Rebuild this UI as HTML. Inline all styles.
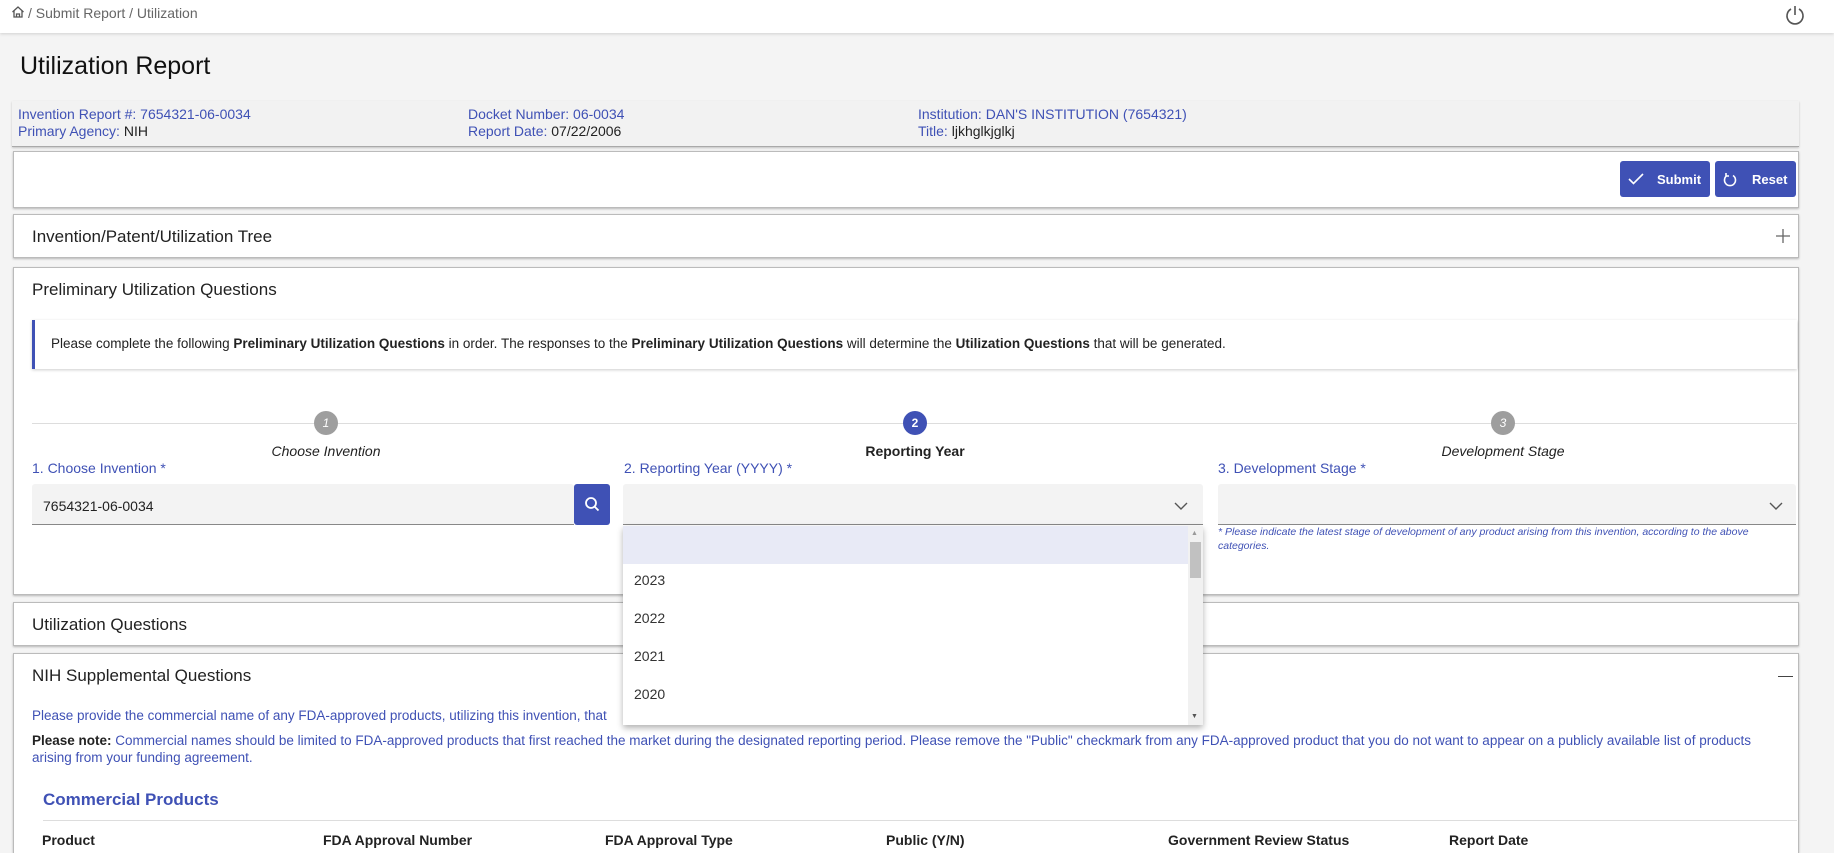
<!DOCTYPE html>
<html><head><meta charset="utf-8"><style>
*{box-sizing:border-box;margin:0;padding:0}
html,body{width:1834px;height:853px;overflow:hidden}
body{background:#f4f4f4;font-family:"Liberation Sans",sans-serif;color:#222;position:relative}
.a{position:absolute}
.card{position:absolute;left:13px;width:1786px;background:#fff;border:1px solid #bbb;box-shadow:0 1px 2px rgba(0,0,0,.25)}
.blue{color:#3f51b5}
.t{font-size:17px;color:#222}
.btn{position:absolute;top:161px;height:36px;background:#3f51b5;color:#fff;border-radius:3px;font-weight:bold;font-size:13px;display:flex;align-items:center}
.circ{position:absolute;width:24px;height:24px;border-radius:50%;background:#9e9e9e;color:#fff;font-size:12px;font-style:italic;text-align:center;line-height:24px;top:411px}
.lbl{position:absolute;top:460px;font-size:14px;color:#3f51b5}
.inp{position:absolute;top:484px;height:41px;background:#f3f3f3;border-bottom:1px solid #888;border-radius:3px 3px 0 0}
.th{position:absolute;top:832px;font-size:14px;font-weight:bold;color:#222}
</style></head><body>
<div class="a" style="left:0;top:0;width:1834px;height:33px;background:#fff;box-shadow:0 1px 3px rgba(0,0,0,.15)"></div>
<svg class="a" style="left:11px;top:5px" width="14" height="14" viewBox="0 0 14 14" fill="none" stroke="#555" stroke-width="1.3"><path d="M1.5 7L7 2l5.5 5M3 6v6h8V6M5.5 12V9h3v3"/></svg>
<div class="a" style="left:28px;top:5px;font-size:14px;color:#666">/ Submit Report / Utilization</div>
<svg class="a" style="left:1784px;top:4px" width="22" height="22" viewBox="0 0 22 22" fill="none" stroke="#555" stroke-width="1.6"><path d="M7 5a8 8 0 1 0 8 0M11 2v9"/></svg>
<div class="a" style="left:20px;top:52px;font-size:25px;color:#111">Utilization Report</div>
<div class="a" style="left:12px;top:101px;width:1787px;height:46px;background:#f2f2f2;border-bottom:1px solid #aaa;box-shadow:0 1px 2px rgba(0,0,0,.2);font-size:14px;line-height:17px">
<div class="a" style="left:6px;top:5px"><span class="blue">Invention Report #: 7654321-06-0034</span><br><span class="blue">Primary Agency:</span> NIH</div>
<div class="a" style="left:456px;top:5px"><span class="blue">Docket Number: 06-0034</span><br><span class="blue">Report Date:</span> 07/22/2006</div>
<div class="a" style="left:906px;top:5px"><span class="blue">Institution: DAN'S INSTITUTION (7654321)</span><br><span class="blue">Title:</span> ljkhglkjglkj</div>
</div>
<div class="card" style="top:151px;height:57px"></div>
<div class="btn" style="left:1620px;width:90px"><svg style="margin:0 13px 0 8px" width="16" height="14" viewBox="0 0 16 14" fill="none" stroke="#fff" stroke-width="1.6"><path d="M1 7l4.5 4.5L15 2"/></svg>Submit</div>
<div class="btn" style="left:1715px;width:81px"><svg style="margin:0 15px 0 8px" width="14" height="16" viewBox="0 0 14 16" fill="none" stroke="#fff" stroke-width="1.6"><path d="M10 4.5a5.5 5.5 0 1 1 -6 0M3 2v3h3"/></svg>Reset</div>
<div class="card" style="top:214px;height:44px"><div class="a t" style="left:18px;top:12px">Invention/Patent/Utilization Tree</div>
<svg class="a" style="left:1762px;top:14px" width="14" height="14" viewBox="0 0 14 14" stroke="#666" stroke-width="1.3"><path d="M7 0v14M0 7h14"/></svg></div>
<div class="card" style="top:267px;height:328px">
<div class="a t" style="left:18px;top:12px">Preliminary Utilization Questions</div>
<div class="a" style="left:18px;top:52px;width:1765px;height:49px;background:#fff;border-left:3px solid #3f51b5;box-shadow:0 1px 3px rgba(0,0,0,.2);font-size:13.5px;padding:16px 0 0 16px">Please complete the following <b>Preliminary Utilization Questions</b> in order. The responses to the <b>Preliminary Utilization Questions</b> will determine the <b>Utilization Questions</b> that will be generated.</div>
<div class="a" style="left:18px;top:155px;width:1765px;height:1px;background:#ddd"></div>
</div>
<div class="circ" style="left:314px">1</div>
<div class="circ" style="left:903px;background:#3f51b5;font-style:normal;font-weight:bold">2</div>
<div class="circ" style="left:1491px">3</div>
<div class="a" style="left:226px;width:200px;text-align:center;top:443px;font-size:14px;font-style:italic">Choose Invention</div>
<div class="a" style="left:815px;width:200px;text-align:center;top:443px;font-size:14px;font-weight:bold">Reporting Year</div>
<div class="a" style="left:1403px;width:200px;text-align:center;top:443px;font-size:14px;font-style:italic">Development Stage</div>
<div class="lbl" style="left:32px">1. Choose Invention *</div>
<div class="lbl" style="left:624px">2. Reporting Year (YYYY) *</div>
<div class="lbl" style="left:1218px">3. Development Stage *</div>
<div class="inp" style="left:32px;width:542px;font-size:14px;padding:14px 0 0 11px">7654321-06-0034</div>
<div class="a" style="left:574px;top:484px;width:36px;height:41px;background:#3f51b5;border-radius:3px"><svg style="margin:12px 0 0 10px" width="16" height="16" viewBox="0 0 16 16" fill="none" stroke="#fff" stroke-width="1.8"><circle cx="7" cy="7" r="5"/><path d="M11 11l3.5 3.5"/></svg></div>
<div class="inp" style="left:623px;width:580px"><svg class="a" style="left:551px;top:18px" width="14" height="8" viewBox="0 0 14 8" fill="none" stroke="#555" stroke-width="1.4"><path d="M1 1l6 6 6-6"/></svg></div>
<div class="inp" style="left:1218px;width:578px"><svg class="a" style="left:551px;top:18px" width="14" height="8" viewBox="0 0 14 8" fill="none" stroke="#555" stroke-width="1.4"><path d="M1 1l6 6 6-6"/></svg></div>
<div class="a" style="left:1218px;top:525px;width:565px;font-size:10.5px;font-style:italic;color:#3f51b5;line-height:14px">* Please indicate the latest stage of development of any product arising from this invention, according to the above categories.</div>
<div class="card" style="top:602px;height:44px"><div class="a t" style="left:18px;top:12px">Utilization Questions</div></div>
<div class="card" style="top:653px;height:200px;border-bottom:none">
<div class="a t" style="left:18px;top:12px">NIH Supplemental Questions</div>
<div class="a" style="left:1764px;top:22px;width:15px;height:1px;background:#444"></div>
<div class="a blue" style="left:18px;top:54px;font-size:13.5px">Please provide the commercial name of any FDA-approved products, utilizing this invention, that</div>
<div class="a blue" style="left:18px;top:78px;width:1740px;font-size:13.5px;line-height:17px"><b style="color:#222">Please note:</b> Commercial names should be limited to FDA-approved products that first reached the market during the designated reporting period. Please remove the "Public" checkmark from any FDA-approved product that you do not want to appear on a publicly available list of products arising from your funding agreement.</div>
<div class="a blue" style="left:29px;top:136px;font-size:17px;font-weight:bold">Commercial Products</div>
<div class="a" style="left:29px;top:166px;width:1754px;height:1px;background:#ddd"></div>
</div>
<div class="th" style="left:42px">Product</div>
<div class="th" style="left:323px">FDA Approval Number</div>
<div class="th" style="left:605px">FDA Approval Type</div>
<div class="th" style="left:886px">Public (Y/N)</div>
<div class="th" style="left:1168px">Government Review Status</div>
<div class="th" style="left:1449px">Report Date</div>
<div class="a" style="left:623px;top:526px;width:580px;height:199px;background:#fff;box-shadow:0 3px 6px rgba(0,0,0,.3);font-size:14px;color:#333;overflow:hidden">
<div style="height:38px;width:565px;background:#e8eaf6"></div>
<div class="a" style="left:11px;top:46px">2023</div>
<div class="a" style="left:11px;top:84px">2022</div>
<div class="a" style="left:11px;top:122px">2021</div>
<div class="a" style="left:11px;top:160px">2020</div>
<div class="a" style="left:565px;top:0;width:15px;height:199px;background:#f1f1f1"></div>
<div class="a" style="left:567px;top:16px;width:11px;height:36px;background:#c1c1c1"></div>
<div class="a" style="left:568px;top:4px;font-size:7px;color:#999">▲</div>
<div class="a" style="left:568px;top:187px;font-size:7px;color:#555">▼</div>
</div>
</body></html>
